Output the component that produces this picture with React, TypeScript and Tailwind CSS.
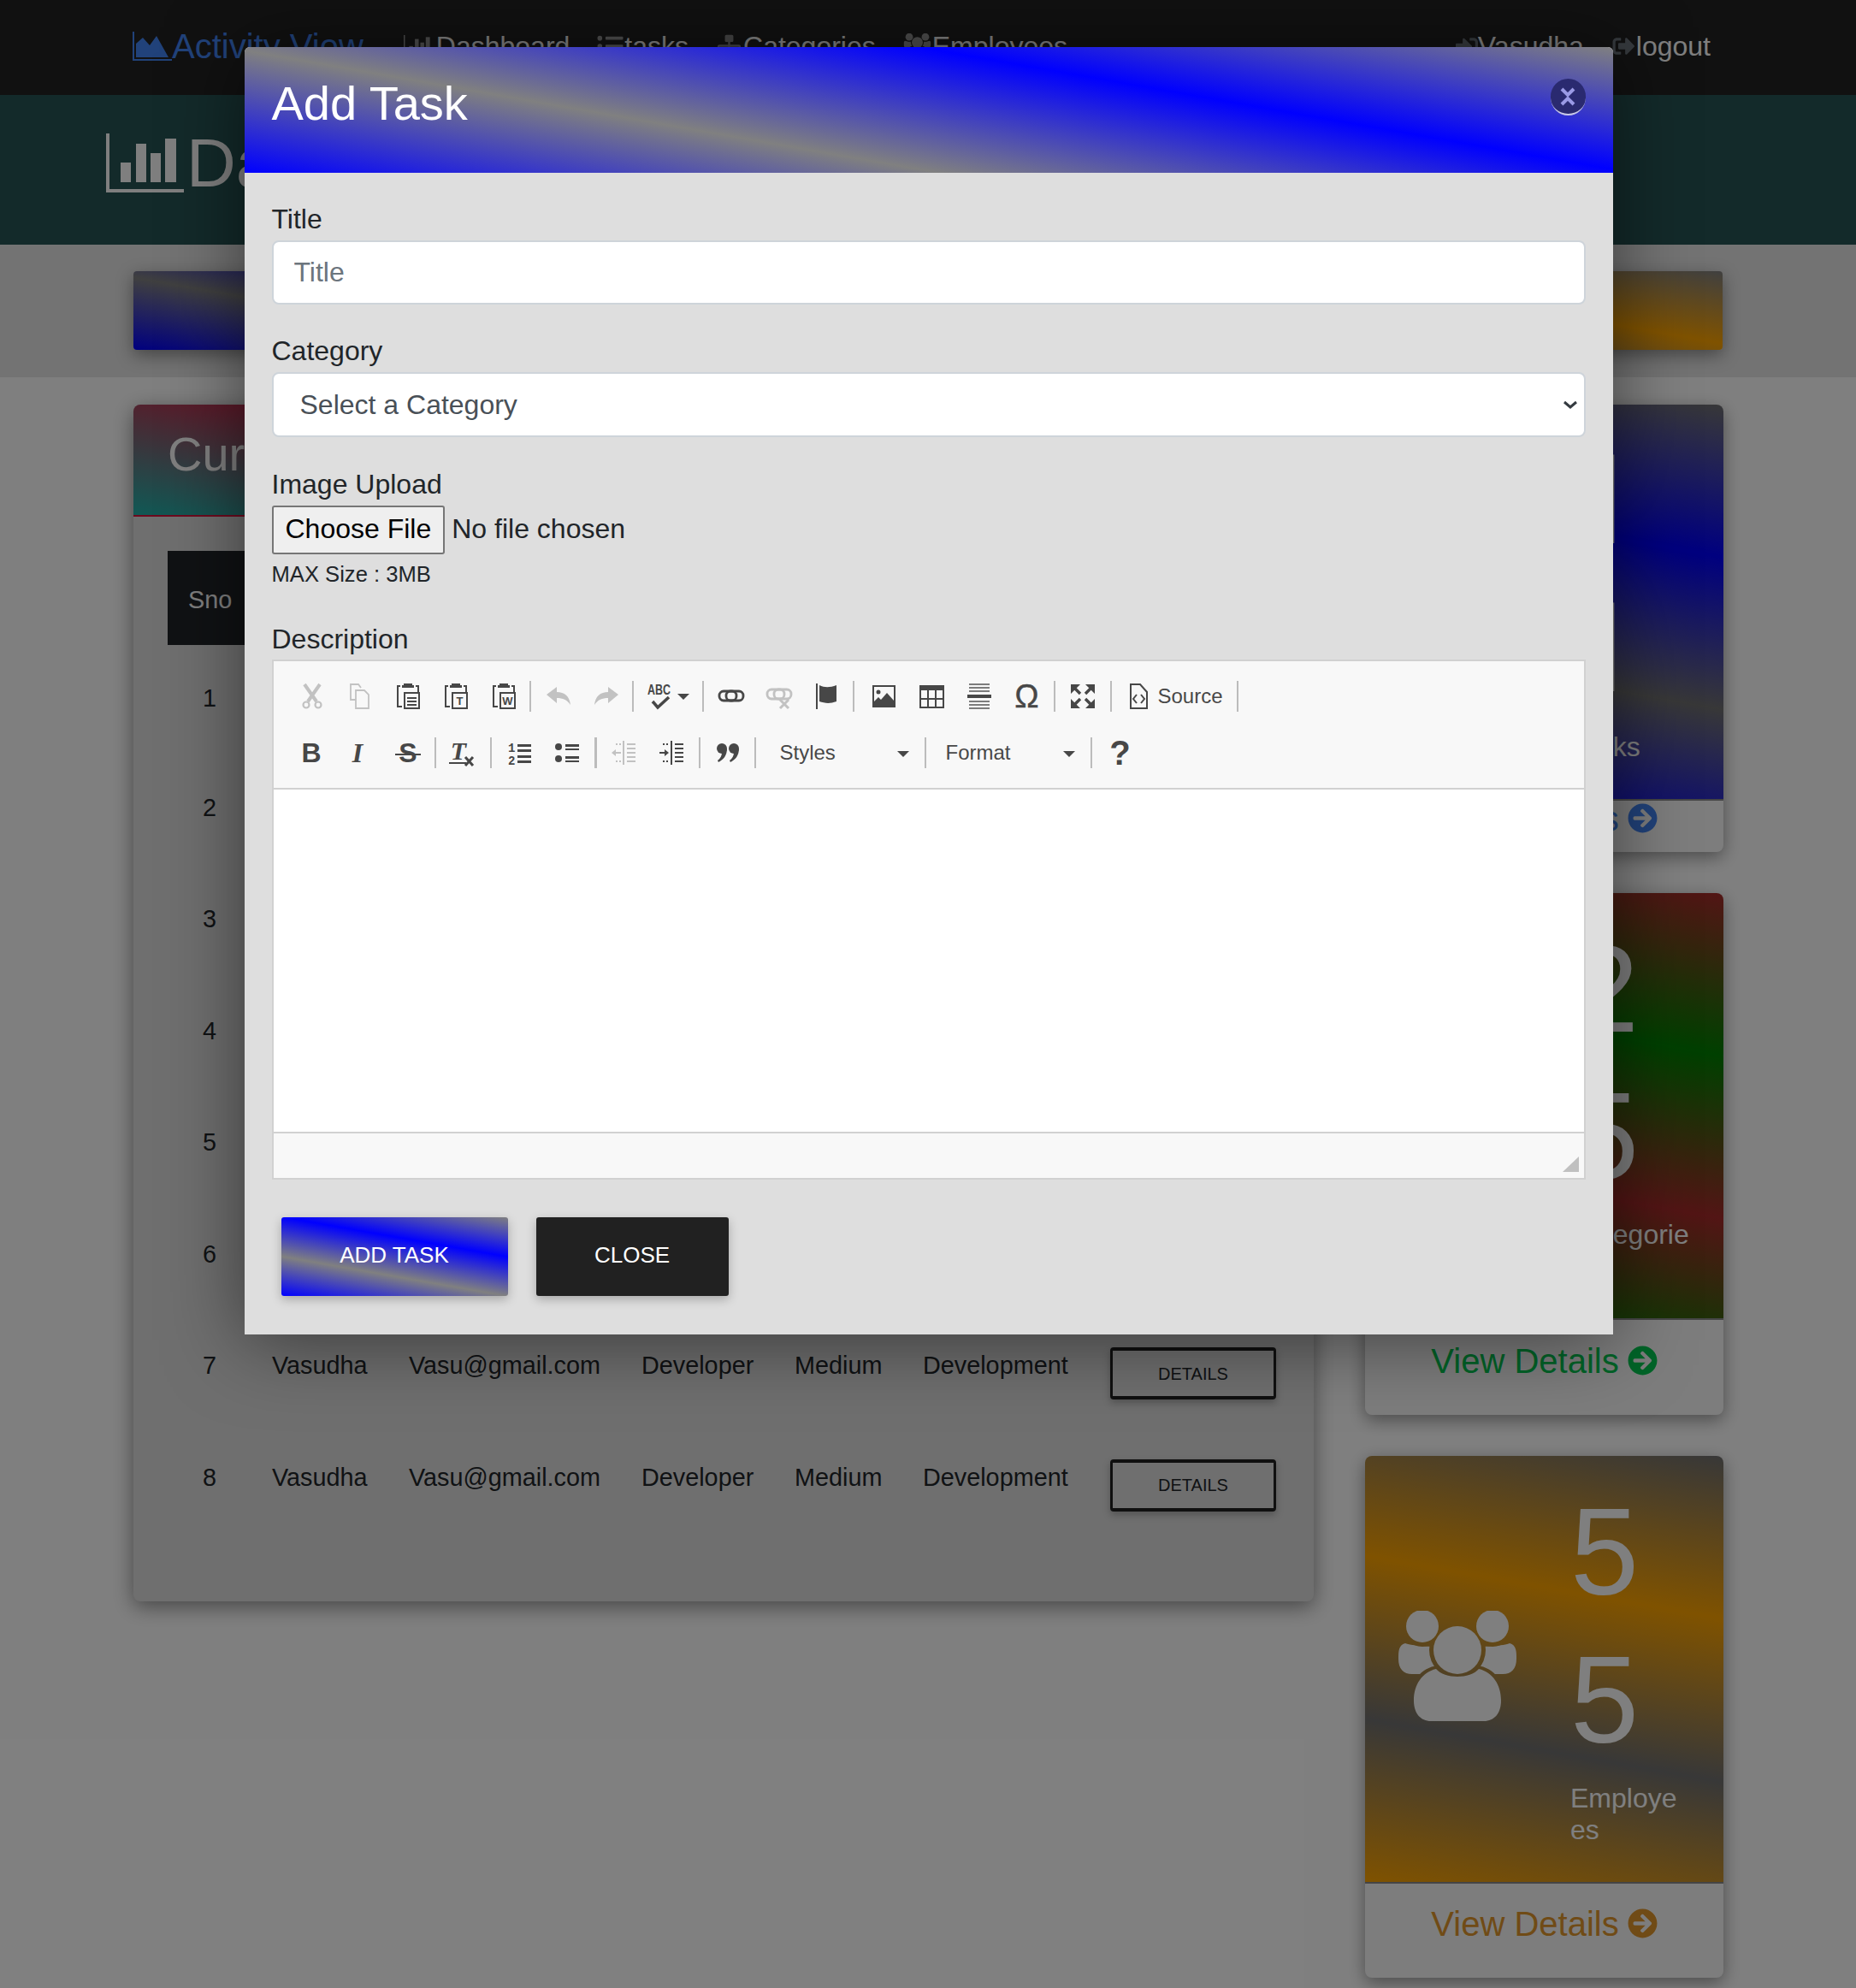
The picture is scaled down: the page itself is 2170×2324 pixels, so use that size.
import React from "react";
import { FaArrowCircleRight, FaSignInAlt, FaSignOutAlt, FaSitemap, FaListUl } from "react-icons/fa";

const D = "#474747";

function BarChart({ className, color }: { className: string; color: string }) {
  return (
    <svg viewBox="0 0 91 69" className={className} fill={color}>
      <path d="M0 0h4v65h87v4H0z" />
      <rect x="17" y="34" width="12" height="23" />
      <rect x="35" y="12" width="12" height="45" />
      <rect x="52" y="23" width="12" height="34" />
      <rect x="69" y="6" width="13" height="51" />
    </svg>
  );
}

function Users({ className, color }: { className: string; color: string }) {
  return (
    <svg viewBox="0 0 138 130" className={className}>
      <mask id="users-gap">
        <rect width="138" height="130" fill="white" />
        <circle cx="69" cy="46" r="33" fill="black" />
        <path d="M16 130V96C16 78 30 66 46 64C54 76 84 76 92 64C108 66 122 78 122 96V130Z" fill="black" />
        <ellipse cx="28" cy="18" rx="24" ry="24" fill="black" />
        <ellipse cx="110" cy="18" rx="24" ry="24" fill="black" />
      </mask>
      <g fill={color}>
        <circle cx="28" cy="18" r="19" />
        <circle cx="110" cy="18" r="19" />
        <path d="M8 38C0 40 0 48 0 56C0 68 6 74 16 74H122C132 74 138 68 138 56C138 48 138 40 130 38C120 44 20 44 8 38Z" mask="url(#users-gap)" />
        <circle cx="69" cy="46" r="28" />
        <path d="M18 105C18 86 28 72 44 68C54 80 84 80 94 68C110 72 120 86 120 105C120 120 112 129 100 129H38C26 129 18 120 18 105Z" />
      </g>
    </svg>
  );
}

function Ico({ children, dim }: { children: React.ReactNode; dim?: boolean }) {
  return (
    <svg viewBox="0 0 32 32" className={dim ? "w-[32px] h-[32px] opacity-30" : "w-[32px] h-[32px]"} fill={D} stroke="none">
      {children}
    </svg>
  );
}

function Tool({ children, w = "w-[56px]" }: { children: React.ReactNode; w?: string }) {
  return <div className={`${w} h-[44px] flex items-center justify-center shrink-0`}>{children}</div>;
}

function Sep({ cls }: { cls: string }) {
  return <div className={`h-[36px] w-[2px] bg-[#bcbcbc] shrink-0 ${cls}`} />;
}

function Caret({ className = "" }: { className?: string }) {
  return (
    <svg viewBox="0 0 14 7" className={`w-[14px] h-[7px] ${className}`} fill={D}>
      <path d="M0 0h14L7 7z" />
    </svg>
  );
}

const Paste = ({ children }: { children: React.ReactNode }) => (
  <Ico>
    <path d="M11 1h10v2h2v3H9V3h2z" />
    <path d="M7 4H4v24h5M25 4h3v7" fill="none" stroke={D} strokeWidth="2" />
    <rect x="12" y="12" width="17" height="18" fill="none" stroke={D} strokeWidth="2" />
    {children}
  </Ico>
);

const svgFont = "Liberation Sans, sans-serif";

function Toolbar() {
  return (
    <div className="bg-[#f8f8f8] border-b-2 border-[#d1d1d1] pt-[8px] h-[150px]">
      <div className="flex items-center h-[66px] pl-[17px]">
        <Tool>
          <Ico dim>
            <path d="M7 2l14 20M25 2L11 22" stroke={D} strokeWidth="4" fill="none" />
            <circle cx="9" cy="26" r="3.5" fill="none" stroke={D} strokeWidth="2.2" />
            <circle cx="23" cy="26" r="3.5" fill="none" stroke={D} strokeWidth="2.2" />
          </Ico>
        </Tool>
        <Tool>
          <Ico dim>
            <path d="M11 20H5V2h9l3 4" fill="none" stroke={D} strokeWidth="1.8" />
            <path d="M11 9h10l5 5v16H11z" fill="none" stroke={D} strokeWidth="1.8" />
          </Ico>
        </Tool>
        <Tool>
          <Paste>
            <path d="M15 17h11v2H15zM15 21h11v2H15zM15 25h11v2H15z" />
          </Paste>
        </Tool>
        <Tool>
          <Paste>
            <text x="20.5" y="26" fontSize="13" fontWeight="700" textAnchor="middle" fontFamily={svgFont} fill={D}>T</text>
          </Paste>
        </Tool>
        <Tool>
          <Paste>
            <text x="20.5" y="26" fontSize="13" fontWeight="700" textAnchor="middle" fontFamily={svgFont} fill={D}>W</text>
          </Paste>
        </Tool>
        <Sep cls="ml-[2px] mr-[4px]" />
        <Tool>
          <Ico dim>
            <path d="M2 14L14 5v6C23 11 29 16 30 26C26 20 21 18 14 18v6z" />
          </Ico>
        </Tool>
        <Tool>
          <Ico dim>
            <path d="M30 14L18 5v6C9 11 3 16 2 26C6 20 11 18 18 18v6z" />
          </Ico>
        </Tool>
        <Sep cls="ml-[2px] mr-[4px]" />
        <div className="w-[74px] h-[44px] flex items-center shrink-0 pl-[11px] gap-[4px]">
          <Ico>
            <text x="1" y="14" fontSize="17" fontWeight="700" textLength="27" lengthAdjust="spacingAndGlyphs" fontFamily={svgFont} fill={D}>ABC</text>
            <path d="M7 22l6 7L26 17" fill="none" stroke={D} strokeWidth="3.6" />
          </Ico>
          <Caret />
        </div>
        <Sep cls="ml-[2px] mr-[4px]" />
        <Tool>
          <Ico>
            <rect x="2" y="10" width="20" height="11" rx="5" fill="none" stroke={D} strokeWidth="2.8" />
            <rect x="10" y="10" width="20" height="11" rx="5" fill="none" stroke={D} strokeWidth="2.8" />
          </Ico>
        </Tool>
        <Tool>
          <Ico dim>
            <rect x="2" y="8" width="20" height="11" rx="5" fill="none" stroke={D} strokeWidth="2.8" />
            <rect x="10" y="8" width="20" height="11" rx="5" fill="none" stroke={D} strokeWidth="2.8" />
            <path d="M17 20l10 10M27 20L17 30" stroke={D} strokeWidth="3" />
          </Ico>
        </Tool>
        <Tool>
          <Ico>
            <path d="M3 1h2v30H3z" />
            <path d="M7 3c6 3 12 3 20 0v19c-8 3-14 2-20 0z" />
          </Ico>
        </Tool>
        <Sep cls="ml-[2px] mr-[6px]" />
        <Tool>
          <Ico>
            <rect x="4" y="4" width="25" height="24" fill="none" stroke={D} strokeWidth="2" />
            <circle cx="10" cy="11" r="2.5" />
            <path d="M5 27v-5l5-5 3 3 7-8 8 9v6z" />
          </Ico>
        </Tool>
        <Tool>
          <Ico>
            <path d="M2 3h29v6H2z" />
            <rect x="3" y="4" width="27" height="25" fill="none" stroke={D} strokeWidth="2" />
            <path d="M12 9v20M21 9v20M3 19h27" stroke={D} strokeWidth="2" />
          </Ico>
        </Tool>
        <Tool>
          <Ico>
            <path d="M4 1h24v2H4zM4 5h24v2H4zM4 9h24v2H4z" opacity="0.7" />
            <path d="M2 14h28v4H2z" />
            <path d="M4 21h24v2H4zM4 25h24v2H4zM4 29h24v2H4z" opacity="0.7" />
          </Ico>
        </Tool>
        <Tool>
          <span className="text-[38px] leading-none text-[#474747] font-normal [-webkit-text-stroke:0.4px_#474747]">Ω</span>
        </Tool>
        <Sep cls="ml-[3px] mr-[4px]" />
        <Tool>
          <Ico>
            <path d="M2 2h11L2 13zM30 2v11L19 2zM2 30V19l11 11zM30 30H19l11-11z" />
            <path d="M7 7l6 6M25 7l-6 6M7 25l6-6M25 25l-6-6" stroke={D} strokeWidth="3.4" />
          </Ico>
        </Tool>
        <Sep cls="ml-[4px] mr-[4px]" />
        <div className="w-[140px] h-[44px] flex items-center pl-[11px] gap-[7px] shrink-0">
          <Ico>
            <path d="M7 2h11l8 9v19H7z" fill="none" stroke={D} strokeWidth="2" />
            <path d="M14 14l-4 5 4 5M19 14l4 5-4 5" fill="none" stroke={D} strokeWidth="2" />
          </Ico>
          <span className="text-[24px] text-[#484848]">Source</span>
        </div>
        <Sep cls="ml-[2px]" />
      </div>
      <div className="flex items-center h-[66px] pl-[16px]">
        <Tool>
          <Ico>
            <text x="16" y="27" fontSize="32" fontWeight="700" textAnchor="middle" fontFamily={svgFont} fill={D}>B</text>
          </Ico>
        </Tool>
        <Tool w="w-[57px]">
          <Ico>
            <text x="14" y="27" fontSize="32" fontWeight="700" fontStyle="italic" textAnchor="middle" fontFamily="Liberation Serif, serif" fill={D}>I</text>
          </Ico>
        </Tool>
        <Tool>
          <Ico>
            <text x="16" y="27" fontSize="32" fontWeight="700" textAnchor="middle" fontFamily={svgFont} fill={D}>S</text>
            <path d="M1 17h30v2H1z" />
          </Ico>
        </Tool>
        <Sep cls="ml-[3px] mr-[2px]" />
        <Tool>
          <Ico>
            <text x="12" y="24" fontSize="30" fontWeight="700" fontStyle="italic" textAnchor="middle" fontFamily="Liberation Serif, serif" fill={D}>T</text>
            <path d="M1 27h20v2H1z" />
            <path d="M20 21l9 10M29 21l-9 10" stroke={D} strokeWidth="3" />
          </Ico>
        </Tool>
        <Sep cls="ml-[5px] mr-[4px]" />
        <Tool>
          <Ico>
            <text x="3" y="15" fontSize="14" fontWeight="700" fontFamily="Liberation Mono, monospace" fill={D}>1</text>
            <text x="3" y="30" fontSize="14" fontWeight="700" fontFamily="Liberation Mono, monospace" fill={D}>2</text>
            <path d="M14 6h16v3H14zM14 12h16v3H14zM14 19h16v3H14zM14 25h16v3H14z" />
          </Ico>
        </Tool>
        <Tool>
          <Ico>
            <circle cx="6" cy="9" r="4" />
            <circle cx="6" cy="23" r="4" />
            <path d="M14 6h16v3H14zM14 11h16v2H14zM14 20h16v3H14zM14 25h16v2H14z" />
          </Ico>
        </Tool>
        <Sep cls="ml-[4px] mr-[3px] w-[3px]" />
        <Tool>
          <Ico dim>
            <path d="M15 2h2v28h-2zM20 5h10v2H20zM20 10h10v2H20zM20 15h10v2H20zM20 20h10v2H20zM20 25h10v2H20z" />
            <path d="M2 16l5-4v3h6v2H7v3z" />
            <path d="M7 5h2v2H7zM11 5h2v2h-2zM7 25h2v2H7zM11 25h2v2h-2z" />
          </Ico>
        </Tool>
        <Tool>
          <Ico>
            <path d="M15 2h2v28h-2zM20 5h10v2H20zM20 10h10v2H20zM20 15h10v2H20zM20 20h10v2H20zM20 25h10v2H20z" />
            <path d="M13 16l-5-4v3H2v2h6v3z" />
            <path d="M6 5h2v2H6zM10 5h2v2h-2zM6 25h2v2H6zM10 25h2v2h-2z" />
          </Ico>
        </Tool>
        <Sep cls="ml-[4px] mr-[4px]" />
        <Tool>
          <Ico>
            <circle cx="9" cy="11" r="6" />
            <path d="M15 11c0 8-4 13-10 16l-1-2c3-2 5-6 5-9z" />
            <circle cx="23" cy="11" r="6" />
            <path d="M29 11c0 8-4 13-10 16l-1-2c3-2 5-6 5-9z" />
          </Ico>
        </Tool>
        <Sep cls="ml-[3px] mr-[4px]" />
        <div className="w-[192px] h-[44px] shrink-0 flex items-center justify-between pl-[24px] pr-[17px] text-[24px] text-[#484848]">
          <span>Styles</span>
          <Caret className="mt-[3px]" />
        </div>
        <Sep cls="ml-[1px] mr-[2px]" />
        <div className="w-[189px] h-[44px] shrink-0 flex items-center justify-between pl-[21px] pr-[17px] text-[24px] text-[#484848]">
          <span>Format</span>
          <Caret className="mt-[3px]" />
        </div>
        <Sep cls="ml-[1px] mr-[5px]" />
        <Tool>
          <span className="text-[40px] leading-none font-bold text-[#474747]">?</span>
        </Tool>
      </div>
    </div>
  );
}

function Nav() {
  const link = "flex items-center text-[32px] text-white";
  return (
    <nav className="h-[111px] bg-[#222222] flex items-center justify-between pl-[155px] pr-[170px] pb-[4px]">
      <div className="flex items-center gap-[31px]">
        <div className="flex items-center text-[40px] text-[#4285f4] mr-[16px]">
          <svg viewBox="0 0 46 34" className="w-[46px] h-[34px]" fill="#4285f4">
            <path d="M0 0h2v32h44v2H0z" />
            <path d="M4 30V14l8-7 8 9 8-11 14 25z" />
          </svg>
          <span>Activity View</span>
        </div>
        <a className={link}>
          <BarChart className="w-[34px] h-[26px] mr-[4px]" color="#9a9a9a" />
          Dashboard
        </a>
        <a className={link}>
          <FaListUl className="w-[33px] h-[30px]" color="#9a9a9a" />
          tasks
        </a>
        <a className={link}>
          <FaSitemap className="w-[33px] h-[30px]" color="#8a8a8a" />
          Categories
        </a>
        <a className={link}>
          <Users className="w-[35px] h-[30px]" color="#9a9a9a" />
          Employees
        </a>
      </div>
      <div className="flex items-center gap-[32px]">
        <a className={link}>
          <FaSignInAlt className="w-[26px] h-[26px]" color="#6c757d" />
          Vasudha
        </a>
        <a className={link}>
          <FaSignOutAlt className="w-[29px] h-[26px]" color="#6c757d" />
          logout
        </a>
      </div>
    </nav>
  );
}

const rows = [1, 2, 3, 4, 5, 6, 7, 8];

function TasksCard() {
  const th = "font-normal text-left text-[28.8px] text-white px-[24px] pt-[6px]";
  const td = "align-top pt-[38px] text-[28.8px] px-[24px] text-[#212529]";
  return (
    <section className="w-[1380px] h-[1399px] bg-[#dedede] rounded-[8px] shadow-[0_6px_24px_rgba(0,0,0,0.45)] overflow-hidden">
      <div className="h-[131px] flex items-center pl-[40px] pb-[14px] border-b-2 border-[#dc143c] bg-[linear-gradient(10deg,#20b2aa,#dc143c,#20b2aa)]">
        <h2 className="text-[56px] text-white">Current Tasks</h2>
      </div>
      <div className="pt-[40px] px-[40px]">
        <table className="table-fixed w-[1320px] border-collapse">
          <thead>
            <tr className="h-[110px] bg-[#212529]">
              <th className={`${th} w-[98px] text-center`}>Sno</th>
              <th className={`${th} w-[160px]`}>Name</th>
              <th className={`${th} w-[272px]`}>Email</th>
              <th className={`${th} w-[179px]`}>Role</th>
              <th className={`${th} w-[150px]`}>Level</th>
              <th className={`${th} w-[219px]`}>Department</th>
              <th className={`${th} w-[242px]`}>Action</th>
            </tr>
          </thead>
          <tbody>
            {rows.map((n) => (
              <tr key={n} className="h-[130.5px]">
                <td className={n === 1 ? `${td} text-center !pt-[41px]` : `${td} text-center`}>{n}</td>
                <td className={td}>Vasudha</td>
                <td className={td}>Vasu@gmail.com</td>
                <td className={td}>Developer</td>
                <td className={td}>Medium</td>
                <td className={`${td} whitespace-nowrap`}>Development</td>
                <td className="align-top pt-[38px] px-[24px]">
                  <button className="w-[194px] h-[61px] border-x-[3px] border-y-4 border-[#212121] rounded-[4px] text-[20px] text-[#212529] shadow-[0_4px_8px_rgba(0,0,0,0.25)]">
                    DETAILS
                  </button>
                </td>
              </tr>
            ))}
          </tbody>
        </table>
      </div>
    </section>
  );
}

function StatCard({
  digits,
  digitFont,
  label,
  gradient,
  foot,
  color,
  footTop,
  iconEl,
}: {
  digits: string;
  digitFont: string;
  label: string;
  gradient: string;
  foot: string;
  color: string;
  footTop: string;
  iconEl?: React.ReactNode;
}) {
  return (
    <div className="rounded-[8px] overflow-hidden bg-[#fafafa] shadow-[0_6px_20px_rgba(0,0,0,0.4)]">
      <div className={`flex pt-[27px] pb-[42px] ${gradient}`}>
        <div className="w-[240px] pl-[39px] pt-[10px] flex items-center">{iconEl}</div>
        <div className="w-[140px]">
          <div className={`text-[144px] leading-[172.8px] text-white break-all ${digitFont}`}>{digits}</div>
          <div className="mt-[9px] text-[32px] leading-[37px] text-white break-all">{label}</div>
        </div>
      </div>
      <div className={`flex justify-center text-[40px] leading-[48px] border-t-2 border-[#8a8a8a] ${foot}`}>
        <div className={`flex items-start gap-[10px] ${footTop}`}>
          <span>View Details</span>
          <FaArrowCircleRight className="w-[35px] h-[35px] mt-[6px]" color={color} />
        </div>
      </div>
    </div>
  );
}

function Modal() {
  const label = "block text-[32px] leading-[48px] text-[#212529]";
  const field = "block w-full bg-white border-2 border-[#ced4da] rounded-[8px] text-[32px] text-[#495057]";
  return (
    <div className="w-[1600px] ml-px bg-[#dedede] rounded-t-[6px] shadow-[0_6px_90px_rgba(0,0,0,0.5)]">
      <header className="h-[147px] rounded-t-[6px] flex items-start justify-between pl-[32px] pr-[32px] pt-[36px] bg-[linear-gradient(10deg,#0000ff,#808080,#0000ff,#808080)]">
        <h1 className="text-[56px] leading-[60px] text-white">Add Task</h1>
        <button className="w-[41px] h-[43px] mt-px rounded-full bg-[#2a2a70] border-b-2 border-[#c8c8e8] flex items-center justify-center">
          <svg viewBox="0 0 24 24" className="w-[24px] h-[28px]">
            <path d="M5 3l7 7 7-7M5 21l7-7 7 7" fill="none" stroke="#9a9ae6" strokeWidth="4" />
          </svg>
        </button>
      </header>
      <div className="px-[32px] pt-[30px] pb-[45px]">
        <label className={label}>Title</label>
        <input placeholder="Title" className={`${field} h-[75px] mt-px px-[24px] placeholder:text-[#6c757d]`} />
        <label className={`${label} mt-[30px]`}>Category</label>
        <div className="relative mt-px">
          <select defaultValue="" className={`${field} h-[76px] pl-[31px] pr-[8px] appearance-none`}>
            <option value="">Select a Category</option>
            <option value="dev">Development</option>
          </select>
          <svg viewBox="0 0 18 10" className="absolute right-[9px] top-[33px] w-[18px] h-[10px] pointer-events-none">
            <path d="M2 2l7 6 7-6" fill="none" stroke="#343a40" strokeWidth="3" />
          </svg>
        </div>
        <label className={`${label} mt-[31px]`}>Image Upload</label>
        <input
          type="file"
          className="block mt-px h-[57px] text-[32px] leading-[50px] text-[#212529] file:h-[57px] file:px-[14px] file:pb-[3px] file:mr-[8px] file:border-2 file:border-solid file:border-[#767676] file:rounded-[3px] file:bg-[#efefef] file:text-[32px] file:text-black"
        />
        <small className="block mt-[4px] text-[25.6px] leading-[38px] text-[#212529]">MAX Size : 3MB</small>
        <label className={`${label} mt-[33px]`}>Description</label>
        <div className="border-2 border-[#d1d1d1] bg-white">
          <Toolbar />
          <div className="h-[400px] bg-white" />
          <div className="h-[54px] bg-[#f8f8f8] border-t-2 border-[#d1d1d1] flex items-end justify-end pr-[6px] pb-[7px]">
            <svg viewBox="0 0 19 18" className="w-[19px] h-[18px]" fill="#c0c0c0">
              <path d="M0 18L19 0v18z" />
            </svg>
          </div>
        </div>
        <div className="flex gap-[33px] mt-[44px] ml-[11px]">
          <button className="w-[265px] h-[92px] pb-[3px] rounded-[3px] text-[26px] text-white shadow-[0_4px_12px_rgba(0,0,0,0.25)] bg-[linear-gradient(10deg,#0000ff,#808080,#0000ff,#808080)]">
            ADD TASK
          </button>
          <button className="w-[225px] h-[92px] pb-[3px] rounded-[3px] text-[26px] text-white bg-[#212121] shadow-[0_4px_12px_rgba(0,0,0,0.25)]">
            CLOSE
          </button>
        </div>
      </div>
    </div>
  );
}

export default function App() {
  return (
    <div className="relative w-[2170px] h-[2324px] overflow-hidden bg-white font-['Liberation_Sans',Arial,sans-serif]">
      <Nav />
      <div className="h-[175px] bg-[#265454] flex items-center pl-[124px] pb-[16px]">
        <BarChart className="w-[91px] h-[69px] mr-[3px]" color="#ffffff" />
        <h1 className="text-[80px] text-white">Dashboard</h1>
      </div>
      <div className="h-[155px] bg-[#e6e6e6] px-[156px] pt-[31px] flex gap-[24px]">
        <div className="flex-1 h-[92px] rounded-[4px] shadow-[0_6px_20px_rgba(0,0,0,0.4)] bg-[linear-gradient(10deg,#0000ff,#808080,#0000ff,#808080)]" />
        <div className="flex-1 h-[92px] rounded-[4px] shadow-[0_6px_20px_rgba(0,0,0,0.4)] bg-[linear-gradient(10deg,#ffa500,#808080,#ffa500,#808080)]" />
      </div>
      <main className="flex gap-[60px] pl-[156px] pt-[32px]">
        <TasksCard />
        <aside className="w-[419px] flex flex-col gap-[48px]">
          <StatCard
            digits="11"
            digitFont="font-['Roboto',sans-serif]"
            label="Tasks"
            gradient="bg-[linear-gradient(10deg,#0000ff,#707070,#0000ff,#707070)]"
            foot="text-[#4285f4] h-[62px]"
            color="#4285f4"
            footTop="-mt-[3px]"
            iconEl={<FaListUl className="w-[138px] h-[110px]" color="#ffffff" />}
          />
          <StatCard
            digits="25"
            digitFont=""
            label="Categories"
            gradient="bg-[linear-gradient(10deg,#008000,#a52a2a,#008000,#a52a2a)]"
            foot="text-[#00c851] h-[113px]"
            color="#00c851"
            footTop="mt-[24px]"
            iconEl={<FaSitemap className="w-[138px] h-[110px]" color="#ffffff" />}
          />
          <StatCard
            digits="55"
            digitFont=""
            label="Employees"
            gradient="bg-[linear-gradient(10deg,#ffa500,#707070,#ffa500,#707070)]"
            foot="text-[#e0962c] h-[112px]"
            color="#e0962c"
            footTop="mt-[23px]"
            iconEl={<Users className="w-[138px] h-[130px]" color="#ffffff" />}
          />
        </aside>
      </main>
      <div className="absolute inset-0 bg-black/50 flex items-start justify-center pt-[55px]">
        <Modal />
      </div>
    </div>
  );
}
